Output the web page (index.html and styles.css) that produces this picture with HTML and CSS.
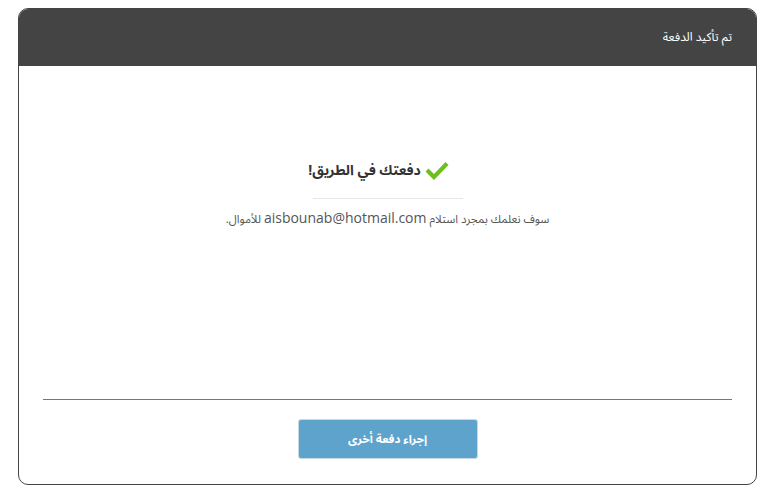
FILE: index.html
```html
<!DOCTYPE html>
<html lang="ar" dir="rtl">
<head>
    <meta charset="UTF-8">
    <title>تم تأكيد الدفعة</title>
    <link rel="stylesheet" href="styles.css">
</head>
<body>
    <div class="pago-tarjeta">
        <div class="pago-cabecera">تم تأكيد الدفعة</div>

        <div class="pago-cuerpo">
            <h2 class="pago-titulo">
                <svg class="pago-check" width="24" height="20" viewBox="0 0 24 20">
                    <path d="M0.5 10.5 L3.5 7.5 L9 13 L20.5 1 L23.5 4 L9 19 Z" fill="#6cbf1c"/>
                </svg>
                <span>دفعتك في الطريق!</span>
            </h2>
            <div class="pago-separador"></div>
            <p class="pago-texto">سوف نعلمك بمجرد استلام <span class="pago-correo">aisbounab@hotmail.com</span> للأموال.</p>
        </div>

        <div class="pago-pie">
            <button class="pago-boton">إجراء دفعة أخرى</button>
        </div>
    </div>
</body>
</html>
```

FILE: styles.css
```css
body {
    margin: 0;
    padding: 8px 18px 15px;
    background: #fff;
    font-family: "Noto Sans Arabic", "Noto Naskh Arabic", "DejaVu Sans", "Open Sans", sans-serif;
}

.pago-tarjeta {
    height: 475px;
    border: 1px solid #444;
    border-radius: 10px;
    overflow: hidden;
    display: flex;
    flex-direction: column;
}

.pago-cabecera {
    background: #444;
    color: #fff;
    height: 57px;
    display: flex;
    align-items: center;
    padding: 0 24px;
    font-size: 12px;
}

.pago-cuerpo {
    height: 334px;
    padding-top: 95px;
    box-sizing: border-box;
    margin: 0 24px;
    border-bottom: 1px solid #777;
    display: flex;
    flex-direction: column;
    align-items: center;
}

.pago-titulo {
    margin: 0;
    padding-right: 18px;
    display: flex;
    align-items: center;
    gap: 4px;
    height: 20px;
    line-height: 20px;
    font-size: 14px;
    font-weight: bold;
    color: #333;
}

.pago-separador {
    width: 150px;
    height: 1px;
    background: #e6e6e6;
    margin: 17px 0 10px;
}

.pago-texto {
    margin: 0;
    line-height: 18px;
    font-size: 11.5px;
    color: #555;
}

.pago-correo {
    font-family: "Open Sans", sans-serif;
    font-size: 14px;
}

.pago-pie {
    display: flex;
    justify-content: center;
    padding-top: 19px;
}

.pago-boton {
    width: 180px;
    height: 40px;
    background: #5ea3cc;
    border: 1px solid #c7d9e4;
    border-radius: 3px;
    color: #fff;
    font-family: inherit;
    font-size: 11.5px;
    font-weight: bold;
}
```
